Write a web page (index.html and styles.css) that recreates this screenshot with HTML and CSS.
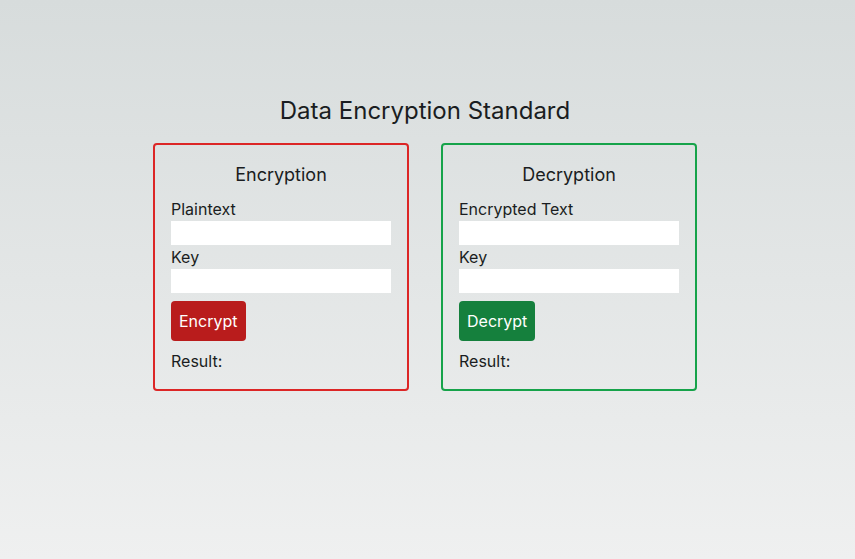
FILE: index.html
```html
<!DOCTYPE html>
<html lang="en">
<head>
<meta charset="utf-8">
<title>Data Encryption Standard</title>
<link rel="stylesheet" href="styles.css">
</head>
<body>
<main class="page">
  <h1 class="title">Data Encryption Standard</h1>
  <div class="cards">
    <section class="card card-red">
      <h2 class="card-title">Encryption</h2>
      <label class="label" for="pt">Plaintext</label>
      <input class="field" id="pt" type="text">
      <label class="label" for="k1">Key</label>
      <input class="field" id="k1" type="text">
      <button class="btn btn-red" type="button">Encrypt</button>
      <p class="result">Result:</p>
    </section>
    <section class="card card-green">
      <h2 class="card-title">Decryption</h2>
      <label class="label" for="ct">Encrypted Text</label>
      <input class="field" id="ct" type="text">
      <label class="label" for="k2">Key</label>
      <input class="field" id="k2" type="text">
      <button class="btn btn-green" type="button">Decrypt</button>
      <p class="result">Result:</p>
    </section>
  </div>
</main>
</body>
</html>
```

FILE: styles.css
```css
* { box-sizing: border-box; }
html, body { margin: 0; padding: 0; }
body {
  min-height: 100vh;
  font-family: Inter, "Noto Sans", sans-serif;
  color: #1a1d21;
  background: linear-gradient(180deg, #d7dcdc 0%, #eff0f0 100%);
}
.page {
  padding: 95px 5px 0 0;
  display: flex;
  flex-direction: column;
  align-items: center;
}
.title {
  margin: 0 0 16px;
  font-size: 24px;
  line-height: 32px;
  font-weight: 400;
}
.cards {
  display: flex;
  gap: 32px;
}
.card {
  width: 256px;
  border: 2px solid;
  border-radius: 4px;
  padding: 16px;
  display: flex;
  flex-direction: column;
  align-items: flex-start;
}
.card-red { border-color: #dc2626; }
.card-green { border-color: #16a34a; }
.card-title {
  align-self: stretch;
  text-align: center;
  margin: 0 0 8px;
  font-size: 18px;
  line-height: 28px;
  font-weight: 400;
}
.label {
  font-size: 16px;
  line-height: 24px;
}
.field {
  width: 100%;
  height: 24px;
  border: none;
  border-radius: 0;
  background: #fff;
  padding: 0 4px;
  font: inherit;
  outline: none;
}
.btn {
  margin-top: 8px;
  border: none;
  border-radius: 4px;
  padding: 8px;
  font-family: inherit;
  font-size: 16px;
  line-height: 24px;
  color: #fff;
  cursor: pointer;
}
.btn-red { background: #b91c1c; }
.btn-green { background: #15803d; }
.result {
  margin: 8px 0 0;
  font-size: 16px;
  line-height: 24px;
}
```
